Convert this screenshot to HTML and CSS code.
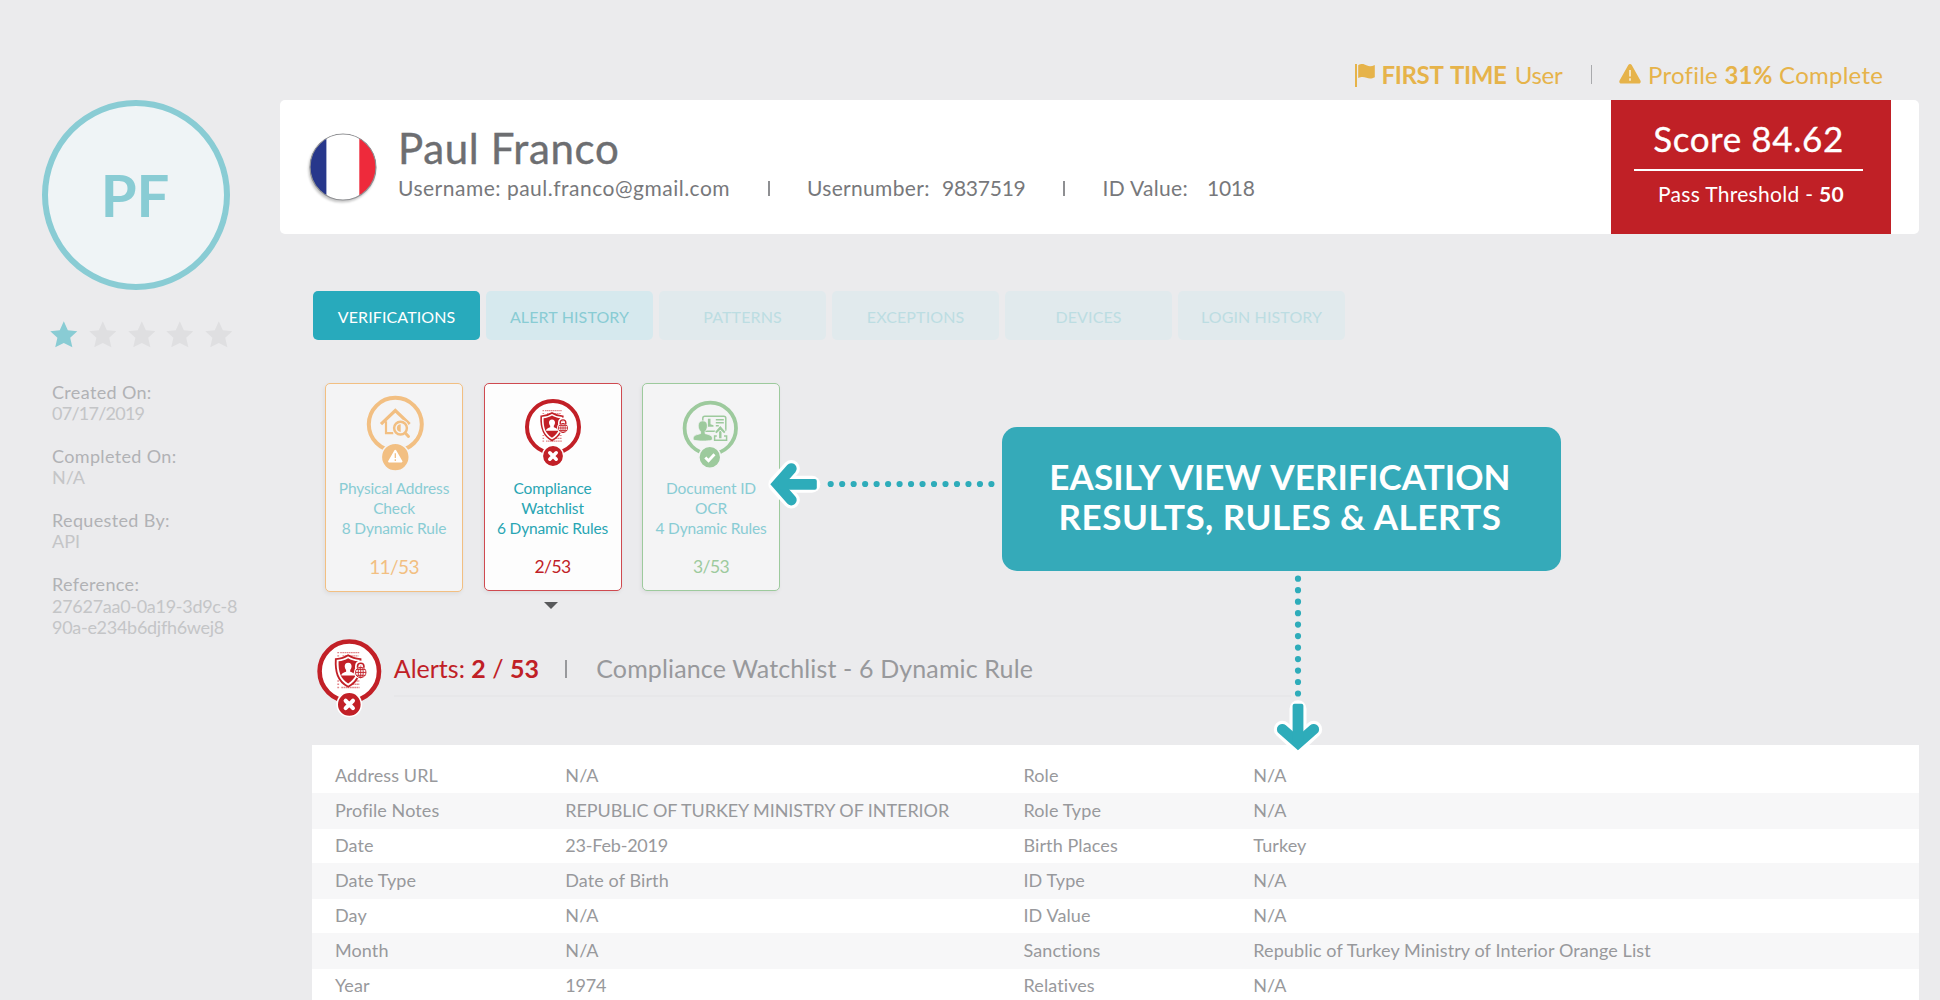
FILE: index.html
```html
<!DOCTYPE html>
<html lang="en">
<head>
<meta charset="utf-8">
<title>Verification profile</title>
<link rel="stylesheet" href="styles.css">
</head>
<body>
<svg class="defs" aria-hidden="true">
  <defs>
    <symbol id="star" viewBox="0 0 28 27">
      <path fill="currentColor" d="M14 0l4.100 9.100 9.600 1-7.200 6.600L22.700 26.500 14 22.200 5.300 26.500 7.500 16.700.3 10.100l9.600-1z"/>
    </symbol>
    <symbol id="watchlist" viewBox="-30 -30 60 72">
      <circle r="26" fill="#fff" stroke="#c22027" stroke-width="4"/>
      <g stroke="#e2878b" stroke-width="1.200">
        <path d="M-10.500-16.300h2M-8-16.300H9M-10.500-13.500h2M-6-13.500H8M-10.500 8.500h2M3 8.500h6M-10.500 11.300h2M3 11.300h6M-10.500 14.200h2M-7 14.200H9" stroke-dasharray="1.500 .4"/>
      </g>
      <path d="M-1-14C2-12 6-11 9.800-10.700 10.400 0 8.500 8.500-1 13.500-10.500 8.500-12.400 0-11.800-10.700-8-11-4-12-1-14z" fill="#fff" stroke="#c22027" stroke-width="1.600"/>
      <path d="M-1-11.400C1.500-9.800 4.500-9 7.400-8.700 7.600 0 6 6.500-1 10.700-8 6.500-9.600 0-9.400-8.700-6.500-9-3.500-9.800-1-11.400z" fill="#c22027"/>
      <path d="M-1-7.500c2 0 3.100 1.400 3 3.300-.1 1.400-.6 2.300-1.200 3v1.500c1.800.7 4 1.200 4.200 3.400h-12c.2-2.200 2.400-2.700 4.200-3.400v-1.500c-.6-.7-1.100-1.600-1.200-3-.1-1.900 1-3.300 3-3.300z" fill="#fff"/>
      <circle cx="10" cy=".8" r="6" fill="#fff"/>
      <path d="M7-2.500v-2a3 3 0 0 1 6 0v2" fill="none" stroke="#fff" stroke-width="4"/>
      <path d="M7.200-3v-1.300a2.800 2.800 0 0 1 5.600 0V-3" fill="none" stroke="#c22027" stroke-width="1.400"/>
      <g fill="none" stroke="#c22027" stroke-width=".8">
        <circle cx="10" cy="1" r="4.600"/>
        <ellipse cx="10" cy="1" rx="2.200" ry="4.600"/>
        <path d="M5.400 1h9.200M6-1.500h8M6 3.500h8M10-3.600v9.200"/>
      </g>
      <circle cy="29" r="10.600" fill="#c22027" stroke="#fff" stroke-width="1.400"/>
      <path d="M-3.200 25.800l6.400 6.400M3.200 25.800l-6.400 6.400" stroke="#fff" stroke-width="3.600" stroke-linecap="round"/>
    </symbol>
    <symbol id="address" viewBox="-30 -30 60 78">
      <circle r="26.500" fill="none" stroke="#f2bf82" stroke-width="4"/>
      <path d="M-14.300-.2L0-13.800 14.300-.2" fill="none" stroke="#f2bf82" stroke-width="3.200"/>
      <path d="M-9.300-3V8.800H-2" fill="none" stroke="#f2bf82" stroke-width="2.200"/>
      <circle cx="5.200" cy="3.800" r="8.600" fill="#f4f4f5"/>
      <circle cx="5.200" cy="3.800" r="6.400" fill="#f4f4f5" stroke="#f2bf82" stroke-width="2.500"/>
      <path d="M5.400 0v7.600A3.800 3.800 0 0 1 5.400 0z" fill="#f2bf82"/>
      <path d="M10.200 9l3 3.200" stroke="#f2bf82" stroke-width="3" stroke-linecap="round"/>
      <circle cy="32.800" r="14" fill="#f2bf82" stroke="#f4f4f5" stroke-width="1.600"/>
      <path d="M0 26.500l6.200 10.600H-6.200z" fill="#fff" stroke="#fff" stroke-width="2" stroke-linejoin="round"/>
      <path d="M0 29v4.600M0 35v1.600" stroke="#f2bf82" stroke-width="1.300"/>
    </symbol>
    <symbol id="document" viewBox="-30 -30 60 72">
      <circle r="25.700" fill="none" stroke="#9dca9d" stroke-width="3.800"/>
      <rect x="-7.500" y="-12" width="23" height="15" rx="2" fill="none" stroke="#9dca9d" stroke-width="1.500"/>
      <path d="M5.500-8.500h8M5.500-5.500h8M5.500-2.500h3" stroke="#9dca9d" stroke-width="1.400"/>
      <path d="M-2.400-9.500h2.600v5.500l3 1v1.500h-5.600z" fill="#9dca9d"/>
      <path d="M-7.500-7.500c3.300 0 4.700 2.300 4.600 5.200-.1 2.600-1 4.300-2.300 5.500v2.100c3.500 1.100 7.400 1.300 7.400 5.500 0 1-1.800 2-9.700 2s-9.700-1-9.700-2c0-4.200 4-4.400 7.500-5.500V3.200c-1.300-1.200-2.300-2.900-2.400-5.500-.1-2.900 1.300-5.200 4.600-5.200z" fill="#9dca9d" stroke="#f4f4f5" stroke-width=".8"/>
      <path d="M5 1h10v4H5z" fill="#f4f4f5"/>
      <path d="M10 10V2" stroke="#9dca9d" stroke-width="2.400"/>
      <path d="M10-2.200l5.200 5.800-1.400 1.400L10 1.400 6.200 5 4.800 3.600z" fill="#9dca9d" stroke="#f4f4f5" stroke-width="1.200" paint-order="stroke"/>
      <path d="M6.500 7.800H4.300v4.200h12v-4.200h-2.600" fill="none" stroke="#9dca9d" stroke-width="1.500"/>
      <circle cx="-.5" cy="29" r="10.900" fill="#9dca9d" stroke="#f4f4f5" stroke-width="1.400"/>
      <path d="M-5 29.300l3.200 3.200 6-6.500" fill="none" stroke="#fff" stroke-width="2.800"/>
    </symbol>
    <g id="arrow">
      <g fill="none" stroke="#fff" stroke-width="17" stroke-linecap="round" stroke-linejoin="round">
        <path d="M21-15.700L6.500 0 21 15.700"/>
        <path d="M8 0h33.500" />
      </g>
      <g fill="none" stroke="#2eacba" stroke-width="10.800" stroke-linecap="round">
        <path d="M21-15.700L7.200 0 21 15.700"/>
      </g>
      <rect x="8" y="-5.400" width="38.500" height="10.800" rx="2" fill="#2eacba"/>
    </g>
  </defs>
</svg>

<div class="page">
  <aside class="sidebar">
    <div class="avatar">PF</div>
    <div class="stars">
      <svg class="star on"><use href="#star"/></svg>
      <svg class="star"><use href="#star"/></svg>
      <svg class="star"><use href="#star"/></svg>
      <svg class="star"><use href="#star"/></svg>
      <svg class="star"><use href="#star"/></svg>
    </div>
    <dl class="facts">
      <div><dt>Created On:</dt><dd class="date">07/17/2019</dd></div>
      <div><dt>Completed On:</dt><dd>N/A</dd></div>
      <div><dt>Requested By:</dt><dd>API</dd></div>
      <div><dt>Reference:</dt><dd class="ref">27627aa0-0a19-3d9c-8<br>90a-e234b6djfh6wej8</dd></div>
    </dl>
  </aside>

  <main class="main">
    <div class="status">
      <svg class="flag-icon" viewBox="0 0 20 24"><path fill="#e6b34a" d="M0 0h2v23H0zM3.200 1.200C7-.8 9 .2 12 1.600c2.500 1.100 5 .7 7.800-.6v12.200c-3 1.700-5.600 1.700-8.300.6-3-1.200-5-1.300-8.300.2z"/></svg>
      <span class="first"><b>FIRST TIME</b> User</span>
      <i class="sep"></i>
      <svg class="warn-icon" viewBox="0 0 22 20"><path fill="#e6b34a" d="M9.300 1c.8-1.300 2.600-1.300 3.400 0l8.700 15.600c.8 1.400-.1 2.900-1.600 2.900H2.200c-1.500 0-2.400-1.500-1.600-2.900z"/><path d="M11 6v6.500M11 14.300v2.400" stroke="#f5e3bd" stroke-width="2"/></svg>
      <span class="profile">Profile <b>31%</b> <span>Complete</span></span>
    </div>

    <header class="card-head">
      <svg class="france" viewBox="0 0 68 70">
        <clipPath id="disc"><circle cx="34" cy="34" r="33"/></clipPath>
        <g clip-path="url(#disc)"><path fill="#fff" d="M0 0h68v68H0z"/><path fill="#27378b" d="M0 0h17.400v68H0z"/><path fill="#ee2a3b" d="M50.300 0H68v68H50.300z"/></g>
        <circle cx="34" cy="34" r="33" fill="none" stroke="#8f9093" stroke-width="1.200"/>
      </svg>
      <div class="who">
        <h1>Paul Franco</h1>
        <div class="meta">
          <span>Username: paul.franco@gmail.com</span><i class="sep"></i>
          <span class="mid">Usernumber:</span><span class="num">9837519</span><i class="sep"></i>
          <span class="mid">ID Value:</span><span class="num">1018</span>
        </div>
      </div>
      <div class="score">
        <div class="score-value">Score 84.62</div>
        <div class="score-pass">Pass Threshold - <b>50</b></div>
      </div>
    </header>

    <nav class="tabs">
      <a class="tab active">VERIFICATIONS</a>
      <a class="tab next">ALERT HISTORY</a>
      <a class="tab">PATTERNS</a>
      <a class="tab">EXCEPTIONS</a>
      <a class="tab">DEVICES</a>
      <a class="tab">LOGIN HISTORY</a>
    </nav>

    <section class="checks">
      <article class="check orange">
        <svg class="pic" viewBox="1 1 136 94"><use href="#address" x="40.300" y="11.300" width="60" height="78"/></svg>
        <p>Physical Address<br>Check<br>8 Dynamic Rule</p>
        <strong>11/53</strong>
      </article>
      <article class="check red">
        <svg class="pic" viewBox="1 1 136 94"><use href="#watchlist" x="39" y="14" width="60" height="72"/></svg>
        <p>Compliance<br>Watchlist<br>6 Dynamic Rules</p>
        <strong>2/53</strong>
      </article>
      <article class="check green">
        <svg class="pic" viewBox="1 1 136 94"><use href="#document" x="38.300" y="15.300" width="60" height="72"/></svg>
        <p>Document ID<br>OCR<br>4 Dynamic Rules</p>
        <strong>3/53</strong>
      </article>
    </section>
    <div class="caret"></div>

    <section class="alerts">
      <svg class="alert-icon"><use href="#watchlist" width="68.600" height="82.300"/></svg>
      <div class="alert-line">
        <span class="alert-count">Alerts: <b>2</b> / <b>53</b></span>
        <i class="sep"></i>
        <span class="alert-title">Compliance Watchlist - 6 Dynamic Rule</span>
      </div>
    </section>

    <section class="details">
      <div class="row"><span>Address URL</span><span>N/A</span><span>Role</span><span>N/A</span></div>
      <div class="row"><span>Profile Notes</span><span class="caps">REPUBLIC OF TURKEY MINISTRY OF INTERIOR</span><span>Role Type</span><span>N/A</span></div>
      <div class="row"><span>Date</span><span class="tight">23-Feb-2019</span><span>Birth Places</span><span>Turkey</span></div>
      <div class="row"><span>Date Type</span><span>Date of Birth</span><span>ID Type</span><span>N/A</span></div>
      <div class="row"><span>Day</span><span>N/A</span><span>ID Value</span><span>N/A</span></div>
      <div class="row"><span>Month</span><span>N/A</span><span>Sanctions</span><span>Republic of Turkey Ministry of Interior Orange List</span></div>
      <div class="row"><span>Year</span><span class="tight">1974</span><span>Relatives</span><span>N/A</span></div>
    </section>
  </main>

  <svg class="pointers" viewBox="760 450 570 310">
    <g fill="none" stroke="#2eacba" stroke-width="6.200" stroke-linecap="round" stroke-dasharray="0 11.480">
      <path d="M830.700 484H992"/>
      <path d="M1298 578.700V694"/>
    </g>
    <use href="#arrow" transform="translate(770.300 484.300)"/>
    <use href="#arrow" transform="translate(1298 750.300) rotate(-90)"/>
  </svg>
  <div class="callout">EASILY VIEW VERIFICATION<br><span>RESULTS, RULES &amp; ALERTS</span></div>
</div>
</body>
</html>
```
FILE: styles.css
```css
* { box-sizing: border-box; }
body {
  margin: 0;
  background: #ebebed;
  font-family: Lato, "Open Sans", sans-serif;
  overflow: hidden;
}
h1, p, dl, dd { margin: 0; }
.defs { display: block; width: 0; height: 0; }

.page {
  position: relative;
  display: grid;
  grid-template-columns: 280px 1660px;
  height: 1000px;
  overflow: hidden;
}

/* Sidebar */
.sidebar { padding-top: 100px; }
.avatar {
  display: flex;
  align-items: center;
  justify-content: center;
  width: 188px;
  height: 190px;
  margin-left: 42px;
  padding: 0 2px 2px 0;
  border: 6px solid #89ccd4;
  border-radius: 50%;
  background: #eff4f6;
  color: #89ccd4;
  font-size: 58px;
  font-weight: 700;
}
.stars { display: flex; gap: 11.200px; margin: 31px 0 0 50px; }
.star { display: block; width: 27.600px; height: 27px; color: #dfdfe1; }
.star.on { color: #89ccd4; }
.facts {
  margin: 33.500px 0 0 52px;
  color: #c4c5c7;
  font-size: 18px;
  line-height: 21.400px;
}
.facts > div { margin-bottom: 21.400px; }
.facts dt { color: #b1b2b5; letter-spacing: .35px; }
.facts .date { letter-spacing: -.75px; }
.facts .ref { letter-spacing: -.28px; white-space: nowrap; }

/* Status line */
.main { display: flex; flex-direction: column; padding-top: 59px; }
.sep { display: block; width: 1.500px; background: #8e8f92; }
.status {
  display: flex;
  height: 41px;
  padding-right: 56px;
  justify-content: flex-end;
  color: #e6b34a;
  font-size: 24px;
  line-height: 31px;
}
.flag-icon { width: 20px; height: 24px; margin: 5px 7px 0 0; }
.first { width: 180px; letter-spacing: -.35px; word-spacing: 2.500px; white-space: nowrap; }
.status .sep { height: 19px; margin: 6px 0 0 29px; background: #a9aaad; }
.warn-icon { width: 22px; height: 20px; margin: 5px 7px 0 27px; }
.profile { width: 236px; letter-spacing: .25px; white-space: nowrap; }

/* Header card */
.card-head {
  display: flex;
  width: 1639px;
  height: 134px;
  padding: 0 28px 0 29px;
  border-radius: 5px;
  background: #fff;
  color: #6d6e71;
}
.france {
  width: 68px;
  height: 70px;
  margin-top: 33px;
  border-radius: 50%;
  filter: drop-shadow(-1px 2px 1px rgba(0, 0, 0, .22));
}
.who { margin-left: 21px; padding-top: 23px; }
.who h1 {
  font-size: 42px;
  font-weight: 400;
  line-height: 51px;
  letter-spacing: .65px;
  -webkit-text-stroke: .4px #6d6e71;
}
.meta {
  display: grid;
  grid-template-columns: 370px 39px 135px 121px 39.500px 104.500px auto;
  margin-top: 1px;
  color: #77787b;
  font-size: 21px;
  line-height: 26px;
  letter-spacing: .5px;
}
.meta .sep { height: 15px; margin-top: 6px; }
.meta .mid { letter-spacing: .32px; }
.meta .num { letter-spacing: -.25px; }
.score {
  width: 280px;
  margin-left: auto;
  background: #c02026;
  color: #fff;
  text-align: center;
}
.score-value {
  width: 229px;
  height: 70.500px;
  margin-left: 23px;
  padding: 18px 0 0;
  border-bottom: 2.500px solid #fff;
  font-size: 35px;
  line-height: 40px;
  letter-spacing: .6px;
  -webkit-text-stroke: .3px #fff;
}
.score-pass { padding: 10px 0 0; font-size: 21px; line-height: 25px; letter-spacing: .3px; }

/* Tabs */
.tabs { display: flex; gap: 6.500px; margin: 57px 0 0 33.300px; }
.tab {
  width: 166.500px;
  height: 49px;
  padding-top: 3px;
  border-radius: 5px;
  background: #e1eaed;
  color: #bcdde2;
  font-size: 16px;
  line-height: 46px;
  letter-spacing: .12px;
  text-align: center;
}
.tab.next { background: #d6e9ee; color: #89ccd4; }
.tab.active { background: #28aabc; color: #fff; }

/* Check cards */
.checks { display: flex; gap: 20.500px; height: 209px; margin: 43px 0 0 45px; }
.check {
  width: 138px;
  height: 208px;
  border: 1px solid;
  border-radius: 5px;
  background: #f4f4f5;
  color: #89ccd4;
  text-align: center;
  box-shadow: -1px 2px 4px rgba(0, 0, 0, .06);
}
.pic { display: block; width: 136px; height: 94px; }
.check p { font-size: 15.500px; line-height: 20px; letter-spacing: -.15px; white-space: nowrap; }
.check strong {
  display: block;
  margin-top: 17px;
  font-size: 17.500px;
  font-weight: 400;
  line-height: 24px;
  letter-spacing: -.6px;
}
.check.orange { height: 209px; border-color: #f2bf82; }
.check.orange strong { color: #f2bf82; font-size: 19px; }
.check.red { border-color: #cf4a50; background: #fdfdfd; color: #28a5b3; }
.check.red strong { color: #c02026; }
.check.green { border-color: #9dca9d; }
.check.green strong { color: #9dca9d; }
.caret {
  width: 14px;
  height: 7px;
  margin: 10px 0 0 264px;
  background: #58595b;
  clip-path: polygon(0 0, 100% 0, 50% 100%);
}

/* Alert heading */
.alerts { display: flex; height: 108px; margin-top: 27.500px; padding-left: 34.700px; }
.alert-icon { width: 68.600px; height: 82.300px; }
.alert-line {
  display: grid;
  grid-template-columns: 171.500px 31px auto;
  width: 897px;
  height: 60px;
  margin-left: 10.500px;
  padding-top: 16px;
  border-bottom: 2px solid #e7e7e9;
  font-size: 25px;
  line-height: 30px;
}
.alert-line .sep { height: 18px; margin-top: 7px; background: #98999c; }
.alert-count { color: #c02026; }
.alert-title { color: #98999c; letter-spacing: .13px; }

/* Details table */
.details { width: 1607px; height: 260px; margin-left: 32px; padding-top: 13.800px; background: #fff; }
.row {
  display: grid;
  grid-template-columns: 230.300px 458.200px 229.800px auto;
  height: 35px;
  padding-left: 23px;
  color: #98999c;
  font-size: 18px;
  line-height: 35px;
  letter-spacing: .1px;
}
.row:nth-child(even) { background: #f7f7f8; box-shadow: 0 1px 0 #f7f7f8; }
.caps { letter-spacing: -.07px; }
.tight { letter-spacing: -.2px; }

/* Annotation laid over the page */
.pointers { position: absolute; left: 760px; top: 450px; width: 570px; height: 310px; }
.callout {
  position: absolute;
  left: 1002px;
  top: 427px;
  width: 559px;
  height: 144px;
  padding: 29px 3px 0 0;
  border-radius: 15px;
  background: #35aab9;
  color: #fff;
  font-size: 35px;
  font-weight: 700;
  line-height: 40px;
  text-align: center;
  letter-spacing: .1px;
  word-spacing: 2px;
}
.callout span { letter-spacing: .5px; word-spacing: 0; }
```
